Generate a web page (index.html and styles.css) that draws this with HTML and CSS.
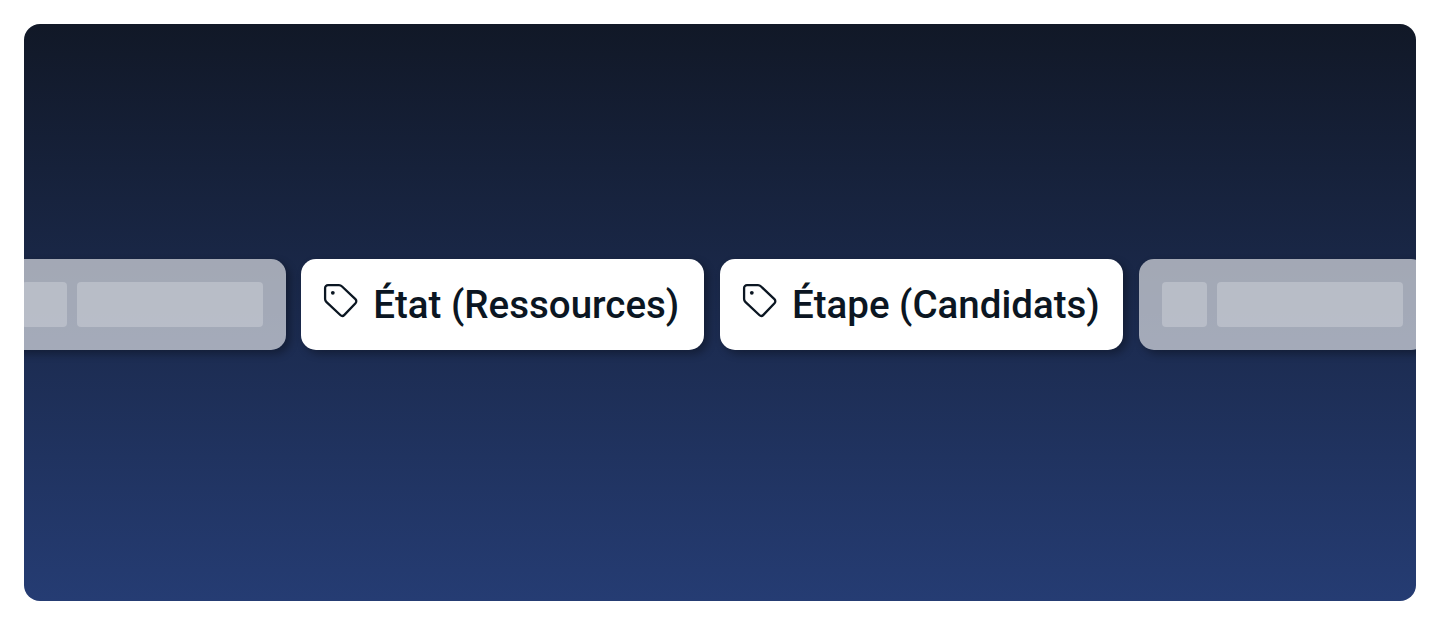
FILE: index.html
```
<!DOCTYPE html>
<html lang="fr">
<head>
    <meta charset="UTF-8">
    <meta name="viewport" content="width=device-width, initial-scale=1.0">
    <title>Étiquettes</title>
    <link rel="stylesheet" href="styles.css">
</head>
<body>
    <div class="panel">
        <div class="card ghost">
            <div class="block square"></div>
            <div class="block line"></div>
        </div>
        <div class="card">
            <svg class="icon" viewBox="0 0 36 36">
                <path d="M5 2.1H16a4 4 0 0 1 2.8 1.2L32.4 16.1a2.9 2.9 0 0 1 .1 4.1L21.4 31.9a2.9 2.9 0 0 1-4.1.1L3.3 18.8a4 4 0 0 1-1.2-2.8V5a2.9 2.9 0 0 1 2.9-2.9z"/>
                <circle cx="9.8" cy="9.8" r="1.9"/>
            </svg>
            <span>État (Ressources)</span>
        </div>
        <div class="card">
            <svg class="icon" viewBox="0 0 36 36">
                <path d="M5 2.1H16a4 4 0 0 1 2.8 1.2L32.4 16.1a2.9 2.9 0 0 1 .1 4.1L21.4 31.9a2.9 2.9 0 0 1-4.1.1L3.3 18.8a4 4 0 0 1-1.2-2.8V5a2.9 2.9 0 0 1 2.9-2.9z"/>
                <circle cx="9.8" cy="9.8" r="1.9"/>
            </svg>
            <span>Étape (Candidats)</span>
        </div>
        <div class="card ghost">
            <div class="block square"></div>
            <div class="block line"></div>
        </div>
    </div>
</body>
</html>
```
FILE: styles.css
```
body {
    margin: 0;
    padding: 24px;
    background: #fff;
    font-family: Roboto, sans-serif;
}

.panel {
    display: flex;
    align-items: flex-start;
    gap: 15.7px;
    box-sizing: border-box;
    height: 577px;
    padding-top: 235px;
    border-radius: 16px;
    background: linear-gradient(#111827, #253c73);
    overflow: hidden;
}

.card {
    display: flex;
    align-items: center;
    flex-shrink: 0;
    box-sizing: border-box;
    width: 403px;
    height: 91px;
    padding-left: 21.5px;
    border-radius: 15px;
    background: #fff;
    box-shadow: 4px 4px 9px rgba(0, 0, 0, 0.33);
    color: #0b1622;
    font-size: 38.5px;
    font-weight: 500;
    white-space: nowrap;
}

.icon {
    flex-shrink: 0;
    width: 36px;
    height: 36px;
    margin: 0 14.4px 7px 0;
}

.icon path {
    fill: none;
    stroke: #0b1622;
    stroke-width: 2.3;
}

.icon circle {
    fill: #0b1622;
}

.ghost {
    width: 287px;
    gap: 9.8px;
    padding-left: 23px;
    background: rgba(255, 255, 255, 0.6);
}

.ghost:first-child {
    margin-left: -25.3px;
}

.block {
    height: 45px;
    border-radius: 4px;
    background: rgba(255, 255, 255, 0.23);
}

.square {
    width: 45.2px;
}

.line {
    width: 186px;
}
```
